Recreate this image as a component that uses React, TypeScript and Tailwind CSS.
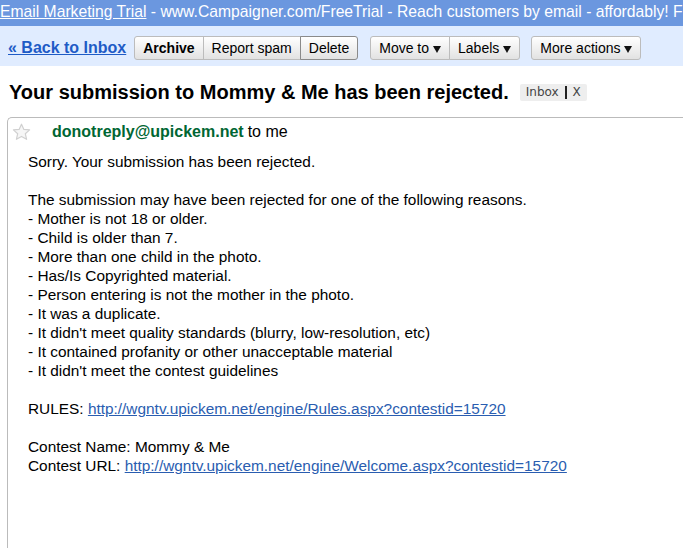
import React from "react";

const Btn: React.FC<{
  label: string;
  bold?: boolean;
  arrow?: boolean;
  pos?: "left" | "mid" | "right" | "single";
  dark?: boolean;
}> = ({ label, bold, arrow, pos = "single", dark }) => {
  const round =
    pos === "left"
      ? "rounded-l-[3px]"
      : pos === "right"
      ? "rounded-r-[3px]"
      : pos === "single"
      ? "rounded-[3px]"
      : "";
  return (
    <div
      className={`h-[24px] flex items-center px-2 border bg-gradient-to-b from-white to-[#e2e2e2] text-[14px] text-black whitespace-nowrap ${round} ${
        dark ? "border-[#8a8a8a] z-10" : "border-[#bcbcbc]"
      } ${bold ? "font-bold" : ""} ${pos === "mid" || pos === "right" ? "-ml-px" : ""}`}
    >
      {label}
      {arrow && (
        <svg width="8" height="7" viewBox="0 0 8 7" className="ml-[4px] mt-[2px]">
          <path d="M0 0H8L4 7Z" fill="#111" />
        </svg>
      )}
    </div>
  );
};

const Star = () => (
  <svg width="19" height="18" viewBox="0 0 19 18">
    <path
      d="M9.5 1.2 L11.9 6.4 L17.6 6.9 L13.3 10.7 L14.6 16.3 L9.5 13.4 L4.4 16.3 L5.7 10.7 L1.4 6.9 L7.1 6.4 Z"
      fill="#f6f6f6"
      stroke="#d0d0d0"
      strokeWidth="1.2"
      strokeLinejoin="round"
    />
  </svg>
);

const lines = [
  "- Mother is not 18 or older.",
  "- Child is older than 7.",
  "- More than one child in the photo.",
  "- Has/Is Copyrighted material.",
  "- Person entering is not the mother in the photo.",
  "- It was a duplicate.",
  "- It didn't meet quality standards (blurry, low-resolution, etc)",
  "- It contained profanity or other unacceptable material",
  "- It didn't meet the contest guidelines",
];

export default function App() {
  return (
    <div className="w-[683px] h-[548px] overflow-hidden bg-white flex flex-col font-['Liberation_Sans',Arial,sans-serif] text-black">
      {/* ad bar */}
      <div className="h-[26px] shrink-0 bg-[#6b97df] text-white text-[15.7px] leading-[24px] whitespace-nowrap overflow-hidden">
        <span className="underline">Email Marketing Trial</span> - www.Campaigner.com/FreeTrial - Reach customers by email -
        affordably! Fr
      </div>

      {/* toolbar */}
      <div className="h-[40px] shrink-0 bg-[#e0ecff] flex items-start pt-[10px] pl-[8px]">
        <a className="text-[16px] font-bold text-[#1e5bc6] underline leading-[24px] mr-[8px]">« Back to Inbox</a>
        <div className="flex">
          <Btn label="Archive" bold pos="left" />
          <Btn label="Report spam" pos="mid" />
          <Btn label="Delete" pos="right" dark />
        </div>
        <div className="flex ml-[12px]">
          <Btn label="Move to" arrow pos="left" />
          <Btn label="Labels" arrow pos="right" />
        </div>
        <div className="flex ml-[11px]">
          <Btn label="More actions" arrow />
        </div>
      </div>

      {/* subject */}
      <div className="flex items-center mt-[14px] pl-[9px] h-[24px] shrink-0">
        <h1 className="text-[20px] font-bold leading-[24px]">Your submission to Mommy &amp; Me has been rejected.</h1>
        <div className="ml-[11px] h-[17px] flex items-center px-[6px] bg-[#eeeeee] rounded-[2px] font-['DejaVu_Sans',sans-serif] text-[12px] text-[#444]">
          <span>Inbox</span>
          <span className="mx-[6px] w-[2px] h-[13px] bg-[#222]" />
          <span>X</span>
        </div>
      </div>

      {/* message card */}
      <div className="flex-1 mt-[13px] ml-[7px] border-t border-l border-[#bbbbbb] rounded-tl-[5px]">
        <div className="flex items-center h-[27px] pl-[4px]">
          <Star />
          <span className="ml-[21px] text-[16px] font-bold text-[#006633]">donotreply@upickem.net</span>
          <span className="ml-[4px] text-[16px]">to me</span>
        </div>
        <div className="pl-[20px] pt-[7px] text-[15.4px] leading-[19px]">
          <div>Sorry. Your submission has been rejected.</div>
          <div className="h-[19px]" />
          <div>The submission may have been rejected for one of the following reasons.</div>
          {lines.map((l) => (
            <div key={l}>{l}</div>
          ))}
          <div className="h-[19px]" />
          <div>
            RULES: <a className="text-[#2a5db0] underline">http://wgntv.upickem.net/engine/Rules.aspx?contestid=15720</a>
          </div>
          <div className="h-[19px]" />
          <div>Contest Name: Mommy &amp; Me</div>
          <div>
            Contest URL:{" "}
            <a className="text-[#2a5db0] underline">http://wgntv.upickem.net/engine/Welcome.aspx?contestid=15720</a>
          </div>
        </div>
      </div>
    </div>
  );
}
